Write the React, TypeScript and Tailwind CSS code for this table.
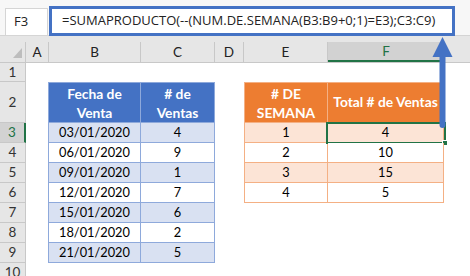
import React from 'react';

// Sales by date and the weekly totals computed from them
const sales = [
  ['03/01/2020', '4'],
  ['06/01/2020', '9'],
  ['09/01/2020', '1'],
  ['12/01/2020', '7'],
  ['15/01/2020', '6'],
  ['18/01/2020', '2'],
  ['21/01/2020', '5'],
];

const weeks = [
  ['1', '4'],
  ['2', '10'],
  ['3', '15'],
  ['4', '5'],
];

const rowHead =
  'w-[26px] shrink-0 flex items-center justify-center bg-[#e6e6e6] border-r border-b border-[#c8c8c8] text-[13.5px] text-[#333]';
const rowHeadActive =
  'w-[26px] shrink-0 flex items-center justify-center bg-[#d2d2d2] border-r-2 border-r-[#217346] border-b border-b-[#c8c8c8] text-[13.5px] text-[#217346]';

const blueB = 'w-[93px] shrink-0 flex items-center justify-center border-l border-r border-b border-[#8ea9db]';
const blueC = 'w-[74px] shrink-0 flex items-center justify-center border-r border-b border-[#8ea9db]';
const orangeE = 'w-[84px] shrink-0 flex items-center justify-center border-l border-r border-b border-[#f4b084]';
const orangeF = 'w-[116px] shrink-0 flex items-center justify-center border-r border-b border-[#f4b084]';

const ColHead = ({ label, w, active }: { label: string; w: string; active?: boolean }) =>
  active ? (
    <div className={`${w} shrink-0 flex items-center justify-center bg-[#d2d2d2] border-r border-[#c8c8c8] border-b-2 border-b-[#217346] text-[#217346]`}>
      {label}
    </div>
  ) : (
    <div className={`${w} shrink-0 flex items-center justify-center border-r border-[#c8c8c8]`}>{label}</div>
  );

const Arrow = () => (
  <svg className="absolute left-[430px] top-[34px]" width="26" height="98" viewBox="0 0 26 98">
    <path d="M9.5 22 H15.5 V91 A3 3 0 0 1 9.5 91 Z" fill="#4472c4" />
    <polygon points="12.5,3 22.5,23 2.5,23" fill="#4472c4" />
  </svg>
);

export default function App() {
  return (
    <div className="relative w-[470px] h-[276px] overflow-hidden bg-white font-['Lato','Liberation_Sans',sans-serif] text-[12.8px] text-black">
      {/* formula bar */}
      <div className="h-[36px] flex items-start pl-[5px] pt-[6px] bg-[#f7f7f7] border-b border-[#d4d4d4]">
        <div className="mt-[2px] w-[43px] h-[28px] flex items-center pl-[8px] bg-white border border-[#d5d5d5] font-['Open_Sans','Noto_Sans',sans-serif] text-[13px] text-[#222]">
          F3
        </div>
        <div className="ml-[1px] w-[406px] h-[30px] flex items-center pl-[10px] bg-white border-[3px] border-[#4472c4] font-['Open_Sans','Noto_Sans',sans-serif] text-[13px] text-[#222] whitespace-nowrap">
          =SUMAPRODUCTO(--(NUM.DE.SEMANA(B3:B9+0;1)=E3);C3:C9)
        </div>
      </div>

      {/* column headers */}
      <div className="bg-[#e6e6e6]">
        <div className="h-[6px]" />
        <div className="h-[21px] flex border-b border-[#c8c8c8] text-[13.5px] text-[#222]">
          <div className="w-[26px] shrink-0 border-r border-[#c8c8c8] flex items-end justify-end pr-[3px] pb-[4px]">
            <svg width="9" height="10" viewBox="0 0 9 10">
              <polygon points="9,0 9,10 0,10" fill="#bdbdbd" />
            </svg>
          </div>
          <ColHead label="A" w="w-[23px]" />
          <ColHead label="B" w="w-[92px]" />
          <ColHead label="C" w="w-[74px]" />
          <ColHead label="D" w="w-[29px]" />
          <ColHead label="E" w="w-[84px]" />
          <ColHead label="F" w="w-[117px]" active />
          <div className="flex-1" />
        </div>
      </div>

      {/* row 1 */}
      <div className="h-[19px] flex">
        <div className={rowHead}>1</div>
      </div>

      {/* row 2: table headers */}
      <div className="h-[41px] flex text-[13.8px]">
        <div className={rowHead}>2</div>
        <div className="w-[22px] shrink-0" />
        <div className={`${blueB} border-t bg-[#4472c4] text-white font-bold flex-col leading-[19px]`}>
          <span>Fecha de</span>
          <span>Venta</span>
        </div>
        <div className={`${blueC} border-t bg-[#4472c4] text-white font-bold flex-col leading-[19px]`}>
          <span># de</span>
          <span>Ventas</span>
        </div>
        <div className="w-[29px] shrink-0" />
        <div className={`${orangeE} border-t bg-[#ed7d31] text-white font-bold flex-col leading-[19px]`}>
          <span># DE</span>
          <span>SEMANA</span>
        </div>
        <div className={`${orangeF} border-t bg-[#ed7d31] text-white font-bold whitespace-nowrap`}>Total # de Ventas</div>
      </div>

      {/* rows 3-9 */}
      {sales.map(([date, qty], i) => {
        const week = weeks[i];
        const blueBand = i % 2 === 0 ? 'bg-[#d9e1f2]' : 'bg-white';
        const orangeBand = i % 2 === 0 ? 'bg-[#fce4d6]' : 'bg-white';
        return (
          <div key={date} className="h-[20px] flex">
            <div className={i === 0 ? rowHeadActive : rowHead}>{i + 3}</div>
            <div className="w-[22px] shrink-0" />
            <div className={`${blueB} ${blueBand}`}>{date}</div>
            <div className={`${blueC} ${blueBand}`}>{qty}</div>
            <div className="w-[29px] shrink-0" />
            {week ? (
              <>
                <div className={`${orangeE} ${orangeBand}`}>{week[0]}</div>
                <div className={`${orangeF} ${orangeBand} relative`}>
                  {week[1]}
                  {i === 0 && (
                    <>
                      <div className="absolute -left-[2px] -top-[1px] w-[120px] h-[22px] border-2 border-[#217346]" />
                      <div className="absolute left-[114px] top-[17px] w-[6px] h-[6px] bg-[#217346] border border-white" />
                    </>
                  )}
                </div>
              </>
            ) : null}
          </div>
        );
      })}

      {/* row 10 */}
      <div className="h-[20px] flex">
        <div className={rowHead}>10</div>
      </div>

      <Arrow />
    </div>
  );
}
